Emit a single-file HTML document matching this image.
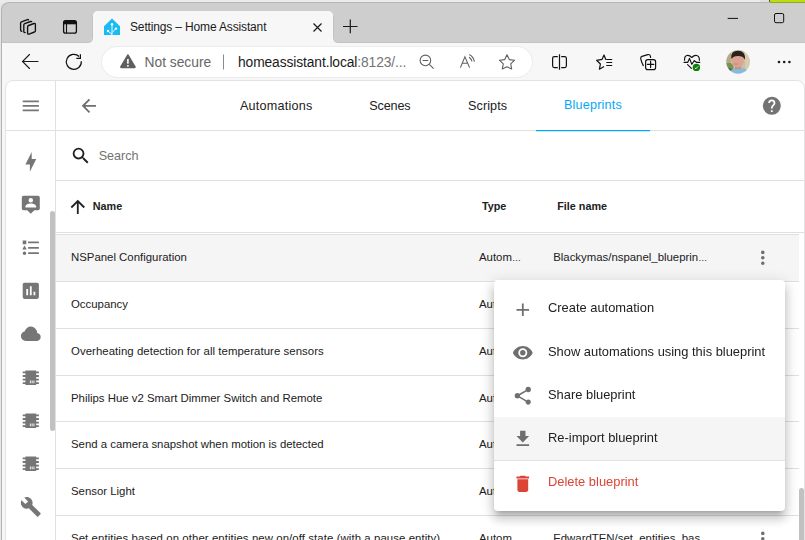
<!DOCTYPE html>
<html><head><meta charset="utf-8">
<style>
*{margin:0;padding:0;box-sizing:border-box}
html,body{width:805px;height:540px;overflow:hidden;background:#e6e6e6;font-family:"Liberation Sans",sans-serif}
.a{position:absolute}
.t{position:absolute;white-space:nowrap;line-height:normal}
svg{position:absolute;overflow:visible}
.ln{position:absolute;height:1px;background:#e0e0e0}
.row{position:absolute;left:56px;width:743px;height:47px;border-bottom:1px solid #e0e0e0}
.rt{position:absolute;white-space:nowrap;line-height:normal;font-size:11.4px;color:#212121}
.mt{position:absolute;white-space:nowrap;line-height:normal;font-size:12.9px;color:#212121;left:548px;will-change:transform}
.si{fill:#767676}
</style></head><body>
<!-- top strip -->
<div class="a" style="left:0;top:0;width:805px;height:3px;background:#ebebeb"></div>
<div class="a" style="left:760px;top:0;width:10px;height:2px;background:#e0e0e0"></div>
<div class="a" style="left:769px;top:0;width:1px;height:2px;background:#555"></div>
<div class="a" style="left:770px;top:0;width:35px;height:3px;background:#bcdc18"></div>
<!-- window -->
<div class="a" style="left:1px;top:2px;width:830px;height:560px;background:#cecece;background-clip:padding-box;border:1px solid rgba(0,0,0,.22);border-right:none;border-bottom:none;border-radius:8px 0 0 0"></div>
<!-- toolbar bg -->
<div class="a" style="left:2px;top:42px;width:803px;height:498px;background:#f7f7f7"></div>
<!-- active tab -->
<div class="a" style="left:93px;top:11px;width:240px;height:32px;background:#f7f7f7;border-radius:5px 5px 0 0"></div>
<div class="a" style="left:2px;top:42px;width:803px;height:1px;background:#c3c3c3"></div>
<div class="a" style="left:93px;top:11px;width:240px;height:32px;background:#f7f7f7;border-radius:5px 5px 0 0"></div>
<div class="a" style="left:89px;top:39px;width:4px;height:4px;background:radial-gradient(circle at 0 0,#cecece 2.6px,#c0c0c0 3.3px,#f7f7f7 4px)"></div>
<div class="a" style="left:333px;top:39px;width:4px;height:4px;background:radial-gradient(circle at 100% 0,#cecece 2.6px,#c0c0c0 3.3px,#f7f7f7 4px)"></div>
<div class="a" style="left:92px;top:16px;width:1px;height:23px;background:#c3c3c3"></div>
<div class="a" style="left:333px;top:16px;width:1px;height:23px;background:#c3c3c3"></div>


<!-- workspaces icon -->
<svg style="left:0;top:0" width="805" height="45" viewBox="0 0 805 45">
  <g fill="none" stroke="#111" stroke-width="1.35" stroke-linejoin="round" stroke-linecap="round">
    <path d="M21.8 31.2 Q20.6 31.2 20.6 30 L20.6 23.2 Q20.6 22.3 21.5 21.9 L27.4 19.6 Q28.2 19.3 28.5 19.8"/>
    <path d="M25.2 32.6 Q23.8 32.6 23.8 31.4 L23.8 25 Q23.8 24.1 24.7 23.7 L30.6 21.5 Q31.4 21.2 31.7 21.7"/>
    <path d="M27.6 27 Q27.6 25.9 28.6 25.5 L34 23.5 Q35.4 23.1 35.4 24.4 L35.4 30.7 Q35.4 31.6 34.5 32 L29 34.1 Q27.6 34.5 27.6 33.3 Z"/>
  </g>
  <!-- vertical tabs icon -->
  <rect x="63.6" y="20.6" width="12.8" height="12.6" rx="2" fill="none" stroke="#111" stroke-width="1.3"/>
  <rect x="63.6" y="20.6" width="12.8" height="3.2" rx="1.5" fill="#111"/>
  <rect x="63.6" y="22.5" width="12.8" height="1.8" fill="#111"/>
  <line x1="66.5" y1="23" x2="66.5" y2="33" stroke="#111" stroke-width="1.1"/>
  <!-- HA logo -->
  <path d="M112 18.6 L120 26.2 L120 35 L104 35 L104 26.2 Z" fill="#18bcf2"/>
  <g stroke="#fff" stroke-width="0.9" fill="none"><path d="M112 24 V35 M108 31 L112 34.5 M116 28.6 L112 32.6"/></g>
  <circle cx="112" cy="24.3" r="1.2" fill="#fff"/><circle cx="108" cy="31" r="1.2" fill="#fff"/><circle cx="116" cy="28.6" r="1.2" fill="#fff"/>
  <!-- close X -->
  <g stroke="#1a1a1a" stroke-width="1.2"><path d="M313.5 23.5 L321.5 31.5 M321.5 23.5 L313.5 31.5"/></g>
  <!-- plus -->
  <g stroke="#1a1a1a" stroke-width="1.2"><path d="M343 26.5 H357.5 M350.3 19.6 V33.2"/></g>
  <!-- minimize -->
  <line x1="727.7" y1="18.4" x2="738" y2="18.4" stroke="#111" stroke-width="1"/>
  <rect x="774.5" y="13.5" width="9.2" height="9.2" rx="1.5" fill="none" stroke="#111" stroke-width="1"/>
</svg>
<div class="t" style="left:130px;top:20px;font-size:12px;letter-spacing:-0.15px;color:#1b1b1b">Settings – Home Assistant</div>

<!-- toolbar -->
<svg style="left:0;top:0" width="805" height="80" viewBox="0 0 805 80">
  <!-- back -->
  <g fill="none" stroke="#1a1a1a" stroke-width="1.1" stroke-linecap="round"><path d="M22.5 61.5 H38 M29.5 54.5 L22.5 61.5 L29.5 68.5"/></g>
  <!-- refresh -->
  <g fill="none" stroke="#111" stroke-width="1.2"><path d="M81.3 61.2 A7.5 7.5 0 1 1 79.1 56.5"/><path d="M80.4 54.2 V58.4 H76.3" stroke-linejoin="miter"/></g>
</svg>
<!-- address bar -->
<div class="a" style="left:102px;top:47px;width:430px;height:30px;background:#fff;border-radius:15px;box-shadow:0 0 0 1px rgba(0,0,0,.03),0 0 2px rgba(0,0,0,.05)"></div>
<svg style="left:0;top:0" width="805" height="80" viewBox="0 0 805 80">
  <path d="M127.3 54.6 Q127.9 53.9 128.5 54.6 L135.6 66.6 Q136.1 68.3 134.6 68.3 L121.2 68.3 Q119.7 68.3 120.2 66.6 Z" fill="#5f5f5f"/>
  <rect x="127.1" y="59" width="1.6" height="4.7" fill="#fff"/><rect x="127.1" y="65.1" width="1.6" height="1.6" fill="#fff"/>
  <line x1="223.5" y1="54.5" x2="223.5" y2="69.5" stroke="#8a8a8a" stroke-width="1"/>
  <!-- zoom out -->
  <g fill="none" stroke="#5f5f5f" stroke-width="1.1"><circle cx="425.4" cy="60.4" r="5.3"/><path d="M422.6 60.5 H428.3 M429.3 64.3 L433.6 68.6"/></g>
  <!-- read aloud -->
  <g fill="none" stroke="#5f5f5f" stroke-width="1.1"><path d="M460.4 67.6 L464.9 56.9 L469.6 67.6 M462.2 63.2 H467.8"/><path d="M469 57.2 Q471.5 58.8 472 61.3"/><path d="M469.3 54.4 Q473.8 56.8 474.4 61.8"/></g>
  <!-- star -->
  <path d="M507 54.8 L509.3 59.6 L514.6 60.2 L510.7 63.8 L511.7 69 L507 66.8 L502.3 69 L503.3 63.8 L499.4 60.2 L504.7 59.6 Z" fill="none" stroke="#5f5f5f" stroke-width="1.1" stroke-linejoin="round"/>
  <!-- split -->
  <g fill="none" stroke="#111" stroke-width="1.2"><path d="M557.8 56.6 H554.4 Q552.6 56.6 552.6 58.4 V65.8 Q552.6 67.6 554.4 67.6 H557.8"/><path d="M561.2 56.6 H564.6 Q566.4 56.6 566.4 58.4 V65.8 Q566.4 67.6 564.6 67.6 H561.2"/><path d="M559.5 54.3 V69.8"/></g>
  <!-- favorites -->
  <g fill="none" stroke="#111" stroke-width="1.2" stroke-linejoin="round"><path d="M606.5 59.5 H605.8 L604 55 L602 59.4 L596.6 60.3 L600.4 64 L599.4 69.2 L604 66.6"/></g>
  <g stroke="#111" stroke-width="1.1"><path d="M606.3 59.5 H612.2 M606.3 62.5 H612.2 M606.3 65.5 H612.2"/></g>
  <!-- collections -->
  <g fill="none" stroke="#111" stroke-width="1.2" stroke-linejoin="round" stroke-linecap="round"><path d="M643.3 65.6 Q641.3 62 640.7 58.4 Q640.5 56.9 642 56.4 L647.8 54.6 Q649.9 54.1 650.4 56.1 L650.6 57.4"/><rect x="645.6" y="59.6" width="10" height="10" rx="2.2"/><path d="M650.6 61.2 V67.6 M647.4 64.4 H653.8"/></g>
  <!-- health -->
  <g fill="none" stroke="#111" stroke-width="1.15" stroke-linejoin="round" stroke-linecap="round"><path d="M684.6 60.3 Q684.2 56.3 686.8 55.5 Q689.3 54.9 691.8 57.5 Q694.3 54.9 696.8 55.5 Q699.6 56.3 699.4 60.3"/><path d="M684 62.3 H687.8 L689.5 58.4 L691.8 64.3 L694.3 60.6 L696.3 62.3 H699.8"/><path d="M687.6 64.6 L691.4 68.4"/></g>
  <circle cx="696.4" cy="67.4" r="3.7" fill="#107c10"/>
  <path d="M694.9 67.9 L695.9 68.8 L698 66.4" fill="none" stroke="#fff" stroke-width="0.9"/>
  <!-- avatar -->
  <defs><clipPath id="av"><circle cx="738.1" cy="61.8" r="11.9"/></clipPath><filter id="bl" x="-20%" y="-20%" width="140%" height="140%"><feGaussianBlur stdDeviation="0.45"/></filter></defs>
  <g clip-path="url(#av)"><g filter="url(#bl)">
    <rect x="722" y="46" width="32" height="32" fill="#cbbf9f"/>
    <rect x="722" y="46" width="9" height="16" fill="#b5a987"/>
    <ellipse cx="728.5" cy="67.5" rx="5" ry="5" fill="#78925a"/>
    <ellipse cx="728" cy="71" rx="4" ry="3" fill="#4a5e3a"/>
    <rect x="745" y="50" width="9" height="22" fill="#d8ccb0"/>
    <ellipse cx="739.5" cy="76" rx="12" ry="8" fill="#86b9de"/>
    <rect x="735" y="64" width="6" height="5" fill="#c88e7e"/>
    <ellipse cx="737.8" cy="60.8" rx="5.9" ry="6.6" fill="#dca391"/>
    <path d="M731.2 58.5 Q730.4 51 738 50.8 Q745.6 51 745 59.5 L743.8 58.5 Q743.6 56 738 56 Q732.6 56 732.3 58.5 Z" fill="#2a201c"/>
    <ellipse cx="736" cy="64" rx="2.4" ry="0.6" fill="#c27f72"/>
  </g></g>
  <!-- more -->
  <g fill="#1a1a1a"><circle cx="779" cy="62" r="1.3"/><circle cx="784.2" cy="62" r="1.3"/><circle cx="789.4" cy="62" r="1.3"/></g>
</svg>
<div class="t" style="left:144.5px;top:54.6px;font-size:13.8px;color:#666">Not secure</div>
<div class="t" style="left:238px;top:54.6px;font-size:13.8px;letter-spacing:-0.1px;color:#1a1a1a">homeassistant.local<span style="color:#737373">:8123/...</span></div>

<!-- content frame -->
<div class="a" id="frame" style="left:5px;top:80px;width:800px;height:480px;background:#fff;border:1px solid #e3e3e3;border-radius:8px 8px 0 0;overflow:hidden"></div>
<!-- ===== HA content ===== -->
<!-- sidebar border -->
<div class="a" style="left:55px;top:81px;width:1px;height:459px;background:#e0e0e0"></div>
<!-- header bottom border -->
<div class="ln" style="left:6px;top:130px;width:798px"></div>
<!-- search bottom border -->
<div class="ln" style="left:56px;top:180px;width:748px"></div>
<!-- table header lines -->
<div class="ln" style="left:56px;top:232px;width:748px"></div>
<div class="ln" style="left:56px;top:234px;width:743px"></div>
<!-- rows -->
<div class="a" style="left:56px;top:235px;width:743px;height:46px;background:#f5f5f5"></div>
<div class="ln" style="left:56px;top:281px;width:743px"></div>
<div class="ln" style="left:56px;top:328px;width:743px"></div>
<div class="ln" style="left:56px;top:375px;width:743px"></div>
<div class="ln" style="left:56px;top:421px;width:743px"></div>
<div class="ln" style="left:56px;top:468px;width:743px"></div>
<div class="ln" style="left:56px;top:515px;width:743px"></div>

<!-- sidebar icons (mdi, 21.6px) -->
<svg style="left:20px;top:94.7px" width="21.6" height="21.6" viewBox="0 0 24 24"><path class="si" d="M3,6H21V8H3V6M3,11H21V13H3V11M3,16H21V18H3V16Z"/></svg>
<svg style="left:20px;top:150.9px" width="21.6" height="21.6" viewBox="0 0 24 24"><path class="si" d="M11 15H6L13 1V9H18L11 23V15Z"/></svg>
<svg style="left:20px;top:194.1px" width="21.6" height="21.6" viewBox="0 0 24 24"><path class="si" d="M4 2H20A2 2 0 0 1 22 4V16A2 2 0 0 1 20 18H16L12 22L8 18H4A2 2 0 0 1 2 16V4A2 2 0 0 1 4 2M12 4.5A2.5 2.5 0 0 0 9.5 7A2.5 2.5 0 0 0 12 9.5A2.5 2.5 0 0 0 14.5 7A2.5 2.5 0 0 0 12 4.5M18 15V14C18 12 15.3 10.5 12 10.5S6 12 6 14V15H18Z"/></svg>
<svg style="left:20px;top:237.3px" width="21.6" height="21.6" viewBox="0 0 24 24"><path class="si" d="M5,9.5L7.5,14H2.5L5,9.5M3,4H7V8H3V4M5,20A2,2 0 0,0 7,18A2,2 0 0,0 5,16A2,2 0 0,0 3,18A2,2 0 0,0 5,20M9,5V7H21V5H9M9,19H21V17H9V19M9,13H21V11H9V13Z"/></svg>
<svg style="left:20px;top:279.7px" width="21.6" height="21.6" viewBox="0 0 24 24"><path class="si" d="M19,3H5C3.89,3 3,3.89 3,5V19A2,2 0 0,0 5,21H19A2,2 0 0,0 21,19V5C21,3.89 20.1,3 19,3M9,17H7V10H9V17M13,17H11V7H13V17M17,17H15V13H17V17Z"/></svg>
<svg style="left:20px;top:322.7px" width="21.6" height="21.6" viewBox="0 0 24 24"><path class="si" d="M6.5 20Q4.22 20 2.61 18.43 1 16.85 1 14.58 1 12.63 2.17 11.1 3.35 9.57 5.25 9.15 5.88 6.85 7.75 5.43 9.63 4 12 4 14.93 4 16.96 6.04 19 8.07 19 11 20.73 11.2 21.86 12.5 23 13.78 23 15.5 23 17.38 21.69 18.69 20.38 20 18.5 20Z"/></svg>
<svg style="left:20px;top:366.9px" width="21.6" height="21.6" viewBox="0 0 24 24"><path class="si" d="M6,4H18V5H21V7H18V9H21V11H18V13H21V15H18V17H21V19H18V20H6V19H3V17H6V15H3V13H6V11H3V9H6V7H3V5H6V4M11,15V18H12V15H11M13,15V18H14V15H13M15,15V18H16V15H15Z"/></svg>
<svg style="left:20px;top:410.1px" width="21.6" height="21.6" viewBox="0 0 24 24"><path class="si" d="M6,4H18V5H21V7H18V9H21V11H18V13H21V15H18V17H21V19H18V20H6V19H3V17H6V15H3V13H6V11H3V9H6V7H3V5H6V4M11,15V18H12V15H11M13,15V18H14V15H13M15,15V18H16V15H15Z"/></svg>
<svg style="left:20px;top:453.3px" width="21.6" height="21.6" viewBox="0 0 24 24"><path class="si" d="M6,4H18V5H21V7H18V9H21V11H18V13H21V15H18V17H21V19H18V20H6V19H3V17H6V15H3V13H6V11H3V9H6V7H3V5H6V4M11,15V18H12V15H11M13,15V18H14V15H13M15,15V18H16V15H15Z"/></svg>
<svg style="left:20px;top:495.8px" width="21.6" height="21.6" viewBox="0 0 24 24"><path class="si" d="M22.7,19L13.6,9.9C14.5,7.6 14,4.9 12.1,3C10.1,1 7.1,0.6 4.7,1.7L9,6L6,9L1.6,4.7C0.4,7.1 0.9,10.1 2.9,12.1C4.8,14 7.5,14.5 9.8,13.6L18.9,22.7C19.3,23.1 19.9,23.1 20.3,22.7L22.6,20.4C23.1,20 23.1,19.3 22.7,19Z"/></svg>
<!-- sidebar scrollbar thumb -->
<div class="a" style="left:50px;top:211px;width:5px;height:220px;background:#c1c1c1;border-radius:3px"></div>

<!-- header -->
<svg style="left:78.3px;top:94.9px" width="21.6" height="21.6" viewBox="0 0 24 24"><path fill="#6f6f6f" d="M20,11V13H8L13.5,18.5L12.08,19.92L4.16,12L12.08,4.08L13.5,5.5L8,11H20Z"/></svg>
<div class="t" style="left:240px;top:98.5px;font-size:12.6px;letter-spacing:0.22px;color:#212121">Automations</div>
<div class="t" style="left:369.3px;top:98.5px;font-size:12.6px;letter-spacing:-0.15px;color:#212121">Scenes</div>
<div class="t" style="left:468px;top:98.5px;font-size:12.6px;letter-spacing:0.1px;color:#212121">Scripts</div>
<div class="t" style="left:564px;top:97.8px;font-size:12.6px;letter-spacing:0.2px;color:#03a9f4">Blueprints</div>
<div class="a" style="left:536px;top:130px;width:114px;height:1px;background:#03a9f4"></div><div class="a" style="left:536px;top:131px;width:114px;height:1px;background:rgba(3,169,244,.25)"></div>
<svg style="left:761px;top:94.9px" width="21.6" height="21.6" viewBox="0 0 24 24"><path fill="#737373" d="M15.07,11.25L14.17,12.17C13.45,12.89 13,13.5 13,15H11V14.5C11,13.39 11.45,12.39 12.17,11.67L13.41,10.41C13.78,10.05 14,9.55 14,9C14,7.89 13.1,7 12,7A2,2 0 0,0 10,9H8A4,4 0 0,1 12,5A4,4 0 0,1 16,9C16,9.88 15.64,10.67 15.07,11.25M13,19H11V17H13M12,2A10,10 0 0,0 2,12A10,10 0 0,0 12,22A10,10 0 0,0 22,12C22,6.47 17.5,2 12,2Z"/></svg>

<!-- search -->
<svg style="left:69.8px;top:144.9px" width="21.6" height="21.6" viewBox="0 0 24 24"><path fill="#212121" d="M9.5,3A6.5,6.5 0 0,1 16,9.5C16,11.11 15.41,12.59 14.44,13.73L14.71,14H15.5L20.5,19L19,20.5L14,15.5V14.71L13.73,14.44C12.59,15.41 11.11,16 9.5,16A6.5,6.5 0 0,1 3,9.5A6.5,6.5 0 0,1 9.5,3M9.5,5C7,5 5,7 5,9.5C5,12 7,14 9.5,14C12,14 14,12 14,9.5C14,7 12,5 9.5,5Z"/></svg>
<div class="t" style="left:98.7px;top:149.4px;font-size:12.6px;color:#727272">Search</div>

<!-- table header -->
<svg style="left:67px;top:196px" width="21.6" height="21.6" viewBox="0 0 24 24"><path fill="#212121" d="M13,20H11V8L5.5,13.5L4.08,12.08L12,4.16L19.92,12.08L18.5,13.5L13,8V20Z"/></svg>
<div class="t" style="left:92.8px;top:199.6px;font-size:10.8px;font-weight:bold;color:#212121">Name</div>
<div class="t" style="left:481.9px;top:199.6px;font-size:10.8px;font-weight:bold;color:#212121">Type</div>
<div class="t" style="left:557.2px;top:199.6px;font-size:10.8px;font-weight:bold;color:#212121">File name</div>

<!-- row texts -->
<div class="rt" style="left:71px;top:251px">NSPanel Configuration</div>
<div class="rt" style="left:479px;top:251px">Autom<span style="font-size:9px">…</span></div>
<div class="rt" style="left:553.2px;top:251px">Blackymas/nspanel_blueprin<span style="font-size:9px">…</span></div>
<svg style="left:751.9px;top:246.9px" width="21.6" height="21.6" viewBox="0 0 24 24"><path fill="#6f6f6f" d="M12,16A2,2 0 0,1 14,18A2,2 0 0,1 12,20A2,2 0 0,1 10,18A2,2 0 0,1 12,16M12,10A2,2 0 0,1 14,12A2,2 0 0,1 12,14A2,2 0 0,1 10,12A2,2 0 0,1 12,10M12,4A2,2 0 0,1 14,6A2,2 0 0,1 12,8A2,2 0 0,1 10,6A2,2 0 0,1 12,4Z"/></svg>
<div class="rt" style="left:71px;top:298px">Occupancy</div>
<div class="rt" style="left:479px;top:298px">Autom<span style="font-size:9px">…</span></div>
<div class="rt" style="left:71px;top:345px;letter-spacing:0.055px">Overheating detection for all temperature sensors</div>
<div class="rt" style="left:479px;top:345px">Autom<span style="font-size:9px">…</span></div>
<div class="rt" style="left:71px;top:392px">Philips Hue v2 Smart Dimmer Switch and Remote</div>
<div class="rt" style="left:479px;top:392px">Autom<span style="font-size:9px">…</span></div>
<div class="rt" style="left:71px;top:438px">Send a camera snapshot when motion is detected</div>
<div class="rt" style="left:479px;top:438px">Autom<span style="font-size:9px">…</span></div>
<div class="rt" style="left:71px;top:485px">Sensor Light</div>
<div class="rt" style="left:479px;top:485px">Autom<span style="font-size:9px">…</span></div>
<div class="rt" style="left:71px;top:532px;letter-spacing:0.08px">Set entities based on other entities new on/off state (with a pause entity)</div>
<div class="rt" style="left:479px;top:532px">Autom<span style="font-size:9px">…</span></div>
<div class="rt" style="left:553.2px;top:532px">EdwardTEN/set_entities_bas<span style="font-size:9px">…</span></div>
<svg style="left:751.9px;top:527.7px" width="21.6" height="21.6" viewBox="0 0 24 24"><path fill="#6f6f6f" d="M12,16A2,2 0 0,1 14,18A2,2 0 0,1 12,20A2,2 0 0,1 10,18A2,2 0 0,1 12,16M12,10A2,2 0 0,1 14,12A2,2 0 0,1 12,14A2,2 0 0,1 10,12A2,2 0 0,1 12,10M12,4A2,2 0 0,1 14,6A2,2 0 0,1 12,8A2,2 0 0,1 10,6A2,2 0 0,1 12,4Z"/></svg>

<!-- main scrollbar -->
<div class="a" style="left:799px;top:488px;width:5px;height:60px;background:#c1c1c1;border-radius:3px"></div>

<!-- menu -->
<div class="a" style="left:494px;top:280px;width:291px;height:231px;background:#fff;border-radius:4px;box-shadow:0 5px 5px -3px rgba(0,0,0,.2),0 8px 10px 1px rgba(0,0,0,.14),0 3px 14px 2px rgba(0,0,0,.12);overflow:hidden">
  <div class="a" style="left:0;top:136.8px;width:291px;height:43.2px;background:#f5f5f5"></div>
  <div class="a" style="left:0;top:180px;width:291px;height:1px;background:#e0e0e0"></div>
</div>
<svg style="left:511.7px;top:299.4px" width="21.6" height="21.6" viewBox="0 0 24 24"><path fill="#6f6f6f" d="M19,13H13V19H11V13H5V11H11V5H13V11H19V13Z"/></svg>
<svg style="left:511.7px;top:341.9px" width="21.6" height="21.6" viewBox="0 0 24 24"><path fill="#6f6f6f" d="M12,9A3,3 0 0,0 9,12A3,3 0 0,0 12,15A3,3 0 0,0 15,12A3,3 0 0,0 12,9M12,17A5,5 0 0,1 7,12A5,5 0 0,1 12,7A5,5 0 0,1 17,12A5,5 0 0,1 12,17M12,4.5C7,4.5 2.730,7.61 1,12C2.73,16.39 7,19.5 12,19.5C17,19.5 21.27,16.39 23,12C21.27,7.61 17,4.5 12,4.5Z"/></svg>
<svg style="left:511.7px;top:385.1px" width="21.6" height="21.6" viewBox="0 0 24 24"><path fill="#6f6f6f" d="M18,16.08C17.24,16.08 16.56,16.38 16.04,16.85L8.91,12.7C8.96,12.47 9,12.24 9,12C9,11.76 8.96,11.53 8.91,11.3L15.96,7.19C16.5,7.69 17.21,8 18,8A3,3 0 0,0 21,5A3,3 0 0,0 18,2A3,3 0 0,0 15,5C15,5.24 15.04,5.470 15.09,5.7L8.04,9.81C7.5,9.31 6.79,9 6,9A3,3 0 0,0 3,12A3,3 0 0,0 6,15C6.79,15 7.5,14.69 8.04,14.19L15.16,18.34C15.11,18.55 15.08,18.77 15.08,19C15.08,20.61 16.39,21.91 18,21.910C19.61,21.91 20.92,20.61 20.92,19A2.92,2.92 0 0,0 18,16.08Z"/></svg>
<svg style="left:511.7px;top:428.3px" width="21.6" height="21.6" viewBox="0 0 24 24"><path fill="#6f6f6f" d="M5,20H19V18H5M19,9H15V3H9V9H5L12,16L19,9Z"/></svg>
<svg style="left:511.7px;top:472.5px" width="21.6" height="21.6" viewBox="0 0 24 24"><path fill="#db4437" d="M19,4H15.5L14.5,3H9.5L8.5,4H5V6H19M6,19A2,2 0 0,0 8,21H16A2,2 0 0,0 18,19V7H6V19Z"/></svg>
<div class="mt" style="top:300px">Create automation</div>
<div class="mt" style="top:344px">Show automations using this blueprint</div>
<div class="mt" style="top:387px">Share blueprint</div>
<div class="mt" style="top:430px">Re-import blueprint</div>
<div class="mt" style="top:474px;color:#db4437">Delete blueprint</div>
</body></html>
